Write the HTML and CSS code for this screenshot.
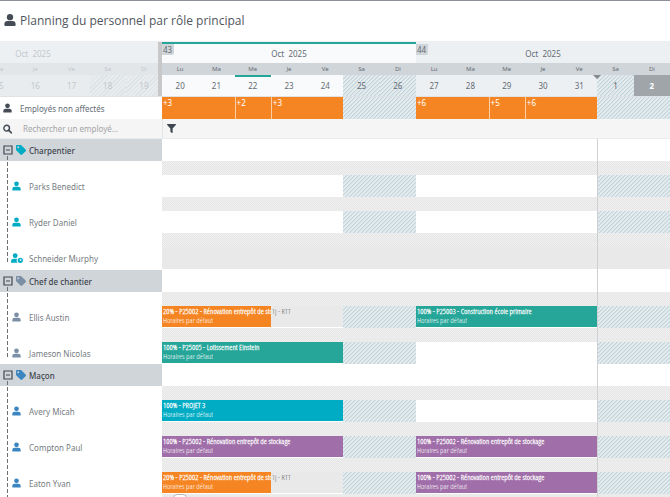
FILE: index.html
```html
<!DOCTYPE html>
<html lang="fr">
<head>
  <meta charset="UTF-8">
  <meta name="viewport" content="width=device-width, initial-scale=1.0">
  <title>Planning du personnel</title>
  <link rel="stylesheet" href="styles.css">
</head>
<body>
  <svg class="symbols" aria-hidden="true">
    <symbol id="user" viewBox="0 0 16 16">
      <circle cx="8" cy="4.2" r="4.2"/>
      <path d="M4.8 9.2h6.4A4.3 4.3 0 0 1 15.5 13.500v1A1.400 1.400 0 0 1 14.100 16H1.900A1.400 1.400 0 0 1 .5 14.500v-1A4.300 4.300 0 0 1 4.800 9.200z"/>
    </symbol>
    <symbol id="user-clock" viewBox="0 0 20 16">
      <circle cx="7" cy="4.200" r="4"/>
      <path d="M4 9.200h6.200a6 6 0 0 0 .8 6.800H1.400A1.400 1.400 0 0 1 0 14.600v-1.200A4.200 4.200 0 0 1 4 9.200z"/>
      <path fill-rule="evenodd" d="M15.500 7.500a4.400 4.400 0 1 1 0 8.800 4.400 4.400 0 0 1 0-8.800zm-.8 1.900v3h2.800v-1.300h-1.400V9.400z"/>
    </symbol>
    <symbol id="tag" viewBox="0 0 16 16">
      <path fill-rule="evenodd" d="M0 1.500v5.800c0 .5.200 1 .6 1.400l6.600 6.600c.8.800 2 .8 2.800 0l5.400-5.400c.8-.8.8-2 0-2.800L8.800.6C8.400.2 7.900 0 7.400 0H1.500C.7 0 0 .7 0 1.500zM3.500 2a1.500 1.500 0 1 1 0 3 1.500 1.500 0 0 1 0-3z"/>
    </symbol>
    <symbol id="minus" viewBox="0 0 10 10">
      <path d="M1 1h8v8H1zM3 5h4" fill="none" stroke="currentColor" stroke-width="1.200"/>
    </symbol>
  </svg>

  <header class="page-title">
    <svg class="title-icon"><use href="#user"/></svg>
    <h1>Planning du personnel par rôle principal</h1>
  </header>

  <main class="planning">
    <div class="row calendar">
      <div class="past">
        <div class="month">Oct&nbsp; 2025</div>
        <div class="past-days weekdays">
          <span>Me</span><span>Je</span><span>Ve</span><span>Sa</span><span>Di</span>
        </div>
        <div class="past-days dates">
          <span>15</span><span>16</span><span>17</span><span class="off">18</span><span class="off">19</span>
        </div>
      </div>
      <div class="weeks">
        <div class="month current"><span class="week-number">43</span>Oct&nbsp; 2025</div>
        <div class="month"><span class="week-number">44</span>Oct&nbsp; 2025</div>
        <div class="days weekdays">
          <span>Lu</span><span>Ma</span><span>Me</span><span>Je</span><span>Ve</span><span>Sa</span><span>Di</span>
          <span>Lu</span><span>Ma</span><span>Me</span><span>Je</span><span>Ve</span><span>Sa</span><span>Di</span>
        </div>
        <div class="days dates">
          <span class="light">20</span><span class="light">21</span><span class="light today">22</span><span class="light">23</span><span class="light">24</span><span class="off">25</span><span class="off">26</span>
          <span>27</span><span>28</span><span>29</span><span>30</span><span>31</span><span class="off month-start">1</span><span class="selected">2</span>
        </div>
      </div>
    </div>

    <div class="row unassigned">
      <div class="name"><svg class="row-icon"><use href="#user"/></svg>Employés non affectés</div>
      <div class="days">
        <span class="count two">+3</span><span class="count">+2</span><span class="count two">+3</span><span class="off two"></span>
        <span class="count two">+6</span><span class="count">+5</span><span class="count two">+6</span><span class="off two"></span>
      </div>
    </div>

    <div class="row filters">
      <label class="search">
        <svg class="row-icon" viewBox="0 0 16 16"><circle cx="6.500" cy="6.500" r="5" fill="none" stroke="currentColor" stroke-width="2.600"/><path d="M10 10l5 5" stroke="currentColor" stroke-width="3" stroke-linecap="round"/></svg>
        <input type="text" placeholder="Rechercher un employé..." aria-label="Rechercher un employé">
      </label>
      <div class="filter-bar">
        <button class="icon-button" aria-label="Filtrer">
          <svg viewBox="0 0 16 16"><path d="M1 0h14c1 0 1.300 1 .7 1.700L10 8v7.200c0 .8-.8 1-1.400.6l-2-1.500c-.4-.3-.6-.6-.6-1V8L.3 1.700C-.3 1 0 0 1 0z"/></svg>
        </button>
      </div>
    </div>

    <div class="groups">
      <section class="group cyan">
        <h2><button class="icon-button" aria-label="Replier"><svg><use href="#minus"/></svg></button><svg class="tag"><use href="#tag"/></svg>Charpentier</h2>
        <div class="row employee">
          <div class="name"><svg><use href="#user"/></svg>Parks Benedict</div>
          <div class="days"><i class="off first"></i><i class="off last"></i></div>
        </div>
        <div class="row employee">
          <div class="name"><svg><use href="#user"/></svg>Ryder Daniel</div>
          <div class="days"><i class="off first"></i><i class="off last"></i></div>
        </div>
        <div class="row employee">
          <div class="name"><svg class="wide"><use href="#user-clock"/></svg>Schneider Murphy</div>
          <div class="days closed"></div>
        </div>
      </section>

      <section class="group slate">
        <h2><button class="icon-button" aria-label="Replier"><svg><use href="#minus"/></svg></button><svg class="tag"><use href="#tag"/></svg>Chef de chantier</h2>
        <div class="row employee">
          <div class="name"><svg><use href="#user"/></svg>Ellis Austin</div>
          <div class="days">
            <div class="task orange three"><b>20% - P25002 - Rénovation entrepôt de sto</b>Horaires par défaut</div>
            <div class="task leave">1j - RTT</div>
            <i class="off first"></i>
            <div class="task green week2"><b>100% - P25003 - Construction école primaire</b>Horaires par défaut</div>
            <i class="off last"></i>
          </div>
        </div>
        <div class="row employee">
          <div class="name"><svg><use href="#user"/></svg>Jameson Nicolas</div>
          <div class="days">
            <div class="task green week1"><b>100% - P25005 - Lotissement Einstein</b>Horaires par défaut</div>
            <i class="off first"></i><i class="off last"></i>
          </div>
        </div>
      </section>

      <section class="group blue">
        <h2><button class="icon-button" aria-label="Replier"><svg><use href="#minus"/></svg></button><svg class="tag"><use href="#tag"/></svg>Maçon</h2>
        <div class="row employee">
          <div class="name"><svg><use href="#user"/></svg>Avery Micah</div>
          <div class="days">
            <div class="task turquoise week1"><b>100% - PROJET 3</b>Horaires par défaut</div>
            <i class="off first"></i><i class="off last"></i>
          </div>
        </div>
        <div class="row employee">
          <div class="name"><svg><use href="#user"/></svg>Compton Paul</div>
          <div class="days">
            <div class="task purple week1"><b>100% - P25002 - Rénovation entrepôt de stockage</b>Horaires par défaut</div>
            <i class="off first"></i>
            <div class="task purple week2"><b>100% - P25002 - Rénovation entrepôt de stockage</b>Horaires par défaut</div>
            <i class="off last"></i>
          </div>
        </div>
        <div class="row employee">
          <div class="name"><svg><use href="#user"/></svg>Eaton Yvan</div>
          <div class="days">
            <div class="task orange three"><b>20% - P25002 - Rénovation entrepôt de sto</b>Horaires par défaut</div>
            <div class="task leave">1j - RTT</div>
            <i class="off first"></i>
            <div class="task purple week2"><b>100% - P25002 - Rénovation entrepôt de stockage</b>Horaires par défaut</div>
            <i class="off last"></i>
          </div>
        </div>
        <div class="row employee">
          <div class="name"></div>
          <div class="days"><span class="handle"></span></div>
        </div>
      </section>
      <div class="month-line"></div>
    </div>
  </main>
</body>
</html>
```
FILE: styles.css
```css
:root {
  --side: 162px;
  --hatch: linear-gradient(135deg, #bfd5e0 12%, #e8ebec 13%, #e8ebec 38%, #bfd5e0 39%, #bfd5e0 62%, #e8ebec 63%, #e8ebec 88%, #bfd5e0 89%);
}

* {
  box-sizing: border-box;
}

body {
  display: flex;
  flex-direction: column;
  height: 100vh;
  margin: 0;
  overflow: hidden;
  border-top: 1px solid #8b8f9c;
  background: #fff;
  color: #646c74;
  font-family: "Noto Sans", "Open Sans", sans-serif;
  font-size: 8px;
}

svg {
  flex: none;
  fill: currentColor;
}

.symbols {
  position: absolute;
  width: 0;
  height: 0;
}

.page-title {
  display: flex;
  flex: none;
  align-items: center;
  gap: 4px;
  height: 41px;
  padding: 0 4px 2px;
  border-bottom: 1px solid #eceeef;
}

.page-title h1 {
  margin: 0;
  color: #4f565d;
  font-family: "Open Sans", sans-serif;
  font-size: 12px;
  font-weight: 400;
}

.title-icon {
  width: 12px;
  height: 12px;
  color: #454c55;
}

.planning {
  display: flex;
  flex: 1;
  flex-direction: column;
  min-height: 0;
}

.row {
  display: grid;
  flex: none;
  grid-template-columns: var(--side) minmax(0, 1fr);
}

.days {
  display: grid;
  grid-template-columns: repeat(14, minmax(0, 1fr));
}

.off {
  background: var(--hatch) 0 0 / 4px 4px;
}

.two {
  grid-column: span 2;
}

.icon-button {
  display: flex;
  flex: none;
  padding: 0;
  border: 0;
  background: none;
  color: #3f4851;
  cursor: pointer;
}

/* calendar header */
.calendar {
  height: 55px;
  border-bottom: 1px solid #dfe3e6;
}

.past {
  overflow: hidden;
  border-right: 4px solid #c8c8c8;
  background: #eceff2;
  color: #c3c8cc;
}

.past .month {
  padding-right: 92px;
}

.past-days {
  display: grid;
  grid-template-columns: repeat(5, 1fr);
  margin: 0 -4px 0 -19px;
}

.month {
  position: relative;
  display: flex;
  align-items: center;
  justify-content: center;
  height: 21px;
  padding-top: 2px;
  background: #edf0f3;
}

.month.current {
  border-top: 2px solid #26a699;
  background: #f8fafc;
  padding-top: 0;
}

.weeks {
  display: grid;
  grid-template-columns: 1fr 1fr;
  align-content: start;
}

.weeks .days {
  grid-column: span 2;
}

.week-number {
  position: absolute;
  top: 0;
  left: 0;
  padding: 0 2px 0 1px;
  border-radius: 0 0 2px 0;
  background: #d0d5d9;
}

.month:not(.current) .week-number {
  top: 2px;
}

.weekdays span,
.dates span {
  display: flex;
  align-items: center;
  justify-content: center;
}

.weekdays {
  height: 12px;
  background: #d0d5d9;
  font-size: 6px;
}

.past .weekdays {
  background: #e2e6e9;
}

.dates {
  height: 21px;
  background: #edf0f3;
}

.past .dates {
  background: #e9ecee;
}

.past .dates .off {
  background: repeating-linear-gradient(135deg, #dde2e5 0 1px, #e9ecee 1px 3px);
}

.dates .light {
  background: #f8fafc;
}

.dates .today {
  border-top: 2px solid #26a699;
  padding-bottom: 2px;
}

.dates .selected {
  background: #a0a5a9;
  color: #fff;
  font-weight: 700;
}

.month-start {
  position: relative;
}

.month-start::before {
  position: absolute;
  top: 0;
  left: -4px;
  border: 4px solid transparent;
  border-top-color: #858a8f;
  border-bottom: 0;
  content: "";
}

/* unassigned staff and search */
.row-icon {
  width: 9px;
  height: 10px;
  color: #454c55;
}

.unassigned {
  height: 22px;
}

.unassigned .name,
.search {
  display: flex;
  align-items: center;
  padding-left: 3px;
  gap: 8px;
}

.count {
  padding-left: 1px;
  background: #f58522;
  color: #fff;
  line-height: 12px;
}

.count + .count {
  border-left: 1px solid #fbd0a6;
}

.filters {
  height: 20px;
  border-bottom: 1px solid #e9ecee;
  background: #f5f5f5;
}

.search {
  gap: 11px;
}

.search input {
  flex: 1;
  min-width: 0;
  padding: 0;
  border: 0;
  outline: 0;
  background: none;
  color: inherit;
  font: inherit;
}

.search input::placeholder {
  color: #a3a5a7;
}

.filter-bar {
  display: flex;
  align-items: center;
  padding-left: 4px;
  border-left: 1px solid #e3e6e8;
}

.filter-bar svg {
  width: 9px;
  height: 9px;
}

/* groups of employees */
.groups {
  position: relative;
  flex: 1;
  min-height: 0;
  overflow: hidden;
}

.group {
  position: relative;
}

.group:first-child {
  padding-bottom: 1px;
}

.group h2 {
  display: flex;
  align-items: center;
  gap: 3px;
  width: var(--side);
  height: 22px;
  margin: 0;
  padding-left: 3px;
  background: #d0d5d9;
  color: #3c444c;
  font-size: 8px;
  font-weight: 500;
}

.group h2 svg {
  width: 10px;
  height: 10px;
}

.group::before {
  position: absolute;
  top: 17px;
  bottom: 7px;
  left: 7px;
  width: 1px;
  background: repeating-linear-gradient(#6f6f6f 0 4px, transparent 4px 6px);
  content: "";
}

.employee {
  height: 36px;
}

.employee .name {
  display: flex;
  align-items: center;
  gap: 8px;
  padding: 14px 0 0 12px;
  color: #767c82;
}

.employee svg {
  width: 9px;
  height: 10px;
}

.employee .wide {
  width: 12px;
  margin-left: -1px;
  margin-right: -2px;
}

.employee .days {
  position: relative;
  grid-template-rows: 14px 22px;
}

.employee .days::before {
  grid-column: 1 / -1;
  grid-row: 1;
  background: repeating-conic-gradient(#e7e7e7 0 25%, #efefef 0 50%) 0 0 / 2px 2px;
  content: "";
}

.employee .closed::after {
  grid-column: 1 / -1;
  grid-row: 2;
  background: #e9e9e9;
  content: "";
}

.first,
.last,
.task {
  grid-row: 2;
}

.first {
  grid-column: 6 / span 2;
}

.last {
  grid-column: 13 / span 2;
}

.task {
  margin-bottom: 1px;
  padding: 0 1px;
  overflow: hidden;
  color: #fff;
  font-family: "Noto Sans ExtraCondensed", "Open Sans Condensed Light", "Liberation Sans Narrow", sans-serif;
  font-size: 8px;
  font-weight: 500;
  line-height: 9px;
  white-space: nowrap;
}

.task b {
  display: block;
  font-weight: 600;
}

.three {
  grid-column: 1 / span 3;
}

.week1 {
  grid-column: 1 / span 5;
}

.week2 {
  grid-column: 8 / span 5;
}

.leave {
  grid-column: 4 / span 2;
  background: #e9e9e9;
  color: #666;
}

.orange {
  background: #f58522;
}

.green {
  background: #26a699;
}

.turquoise {
  background: #00acc4;
}

.purple {
  background: #a06ea8;
}

.cyan .tag,
.cyan .name svg {
  color: #00acc4;
}

.slate .tag,
.slate .name svg {
  color: #7b8fa6;
}

.blue .tag,
.blue .name svg {
  color: #3b86c0;
}

.handle {
  position: absolute;
  top: 0;
  left: 11px;
  width: 14px;
  height: 8px;
  border: 1px solid #b5b5b5;
  border-radius: 4px;
  background: #fff;
}

.month-line {
  position: absolute;
  top: 0;
  bottom: 0;
  left: calc(var(--side) + (100% - var(--side)) * 12 / 14);
  width: 1px;
  background: #cdd1d4;
}
```
